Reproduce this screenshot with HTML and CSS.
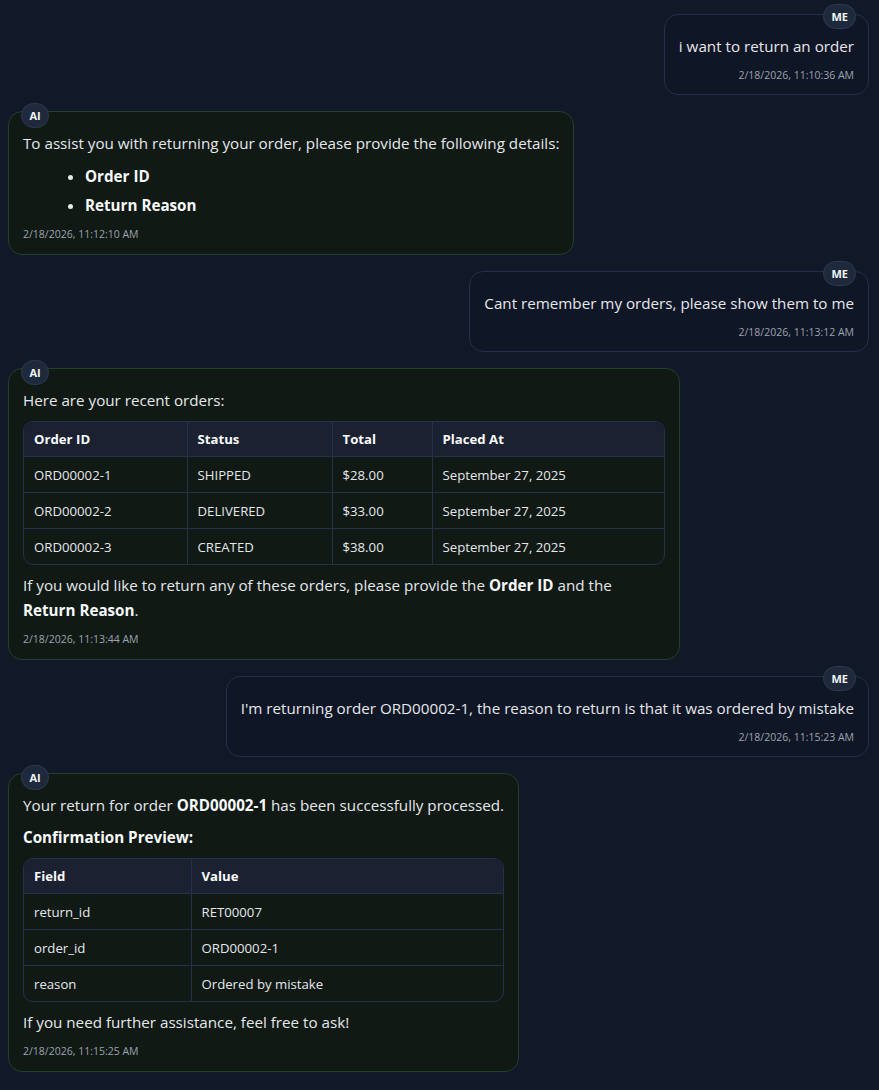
FILE: index.html
```html
<!DOCTYPE html>
<html lang="en">
<head>
<meta charset="utf-8">
<title>Chat</title>
<link rel="stylesheet" href="styles.css">
</head>
<body>
<main class="chat">
  <div class="row row-me">
    <div class="bubble bubble-me">
      <span class="badge badge-me">ME</span>
      <p class="text">i want to return an order</p>
      <div class="time">2/18/2026, 11:10:36 AM</div>
    </div>
  </div>

  <div class="row row-ai">
    <div class="bubble bubble-ai">
      <span class="badge badge-ai">AI</span>
      <p class="text">To assist you with returning your order, please provide the following details:</p>
      <ul class="list">
        <li><strong>Order ID</strong></li>
        <li><strong>Return Reason</strong></li>
      </ul>
      <div class="time">2/18/2026, 11:12:10 AM</div>
    </div>
  </div>

  <div class="row row-me">
    <div class="bubble bubble-me">
      <span class="badge badge-me">ME</span>
      <p class="text">Cant remember my orders, please show them to me</p>
      <div class="time">2/18/2026, 11:13:12 AM</div>
    </div>
  </div>

  <div class="row row-ai">
    <div class="bubble bubble-ai">
      <span class="badge badge-ai">AI</span>
      <p class="text">Here are your recent orders:</p>
      <div class="table-wrap">
        <table class="data">
          <thead>
            <tr><th class="c-id">Order ID</th><th class="c-status">Status</th><th class="c-total">Total</th><th class="c-date">Placed At</th></tr>
          </thead>
          <tbody>
            <tr><td>ORD00002-1</td><td>SHIPPED</td><td>$28.00</td><td>September 27, 2025</td></tr>
            <tr><td>ORD00002-2</td><td>DELIVERED</td><td>$33.00</td><td>September 27, 2025</td></tr>
            <tr><td>ORD00002-3</td><td>CREATED</td><td>$38.00</td><td>September 27, 2025</td></tr>
          </tbody>
        </table>
      </div>
      <p class="text">If you would like to return any of these orders, please provide the <strong>Order ID</strong> and the <strong>Return Reason</strong>.</p>
      <div class="time">2/18/2026, 11:13:44 AM</div>
    </div>
  </div>

  <div class="row row-me">
    <div class="bubble bubble-me">
      <span class="badge badge-me">ME</span>
      <p class="text">I'm returning order ORD00002-1, the reason to return is that it was ordered by mistake</p>
      <div class="time">2/18/2026, 11:15:23 AM</div>
    </div>
  </div>

  <div class="row row-ai">
    <div class="bubble bubble-ai">
      <span class="badge badge-ai">AI</span>
      <p class="text">Your return for order <strong>ORD00002-1</strong> has been successfully processed.</p>
      <p class="text heading"><strong>Confirmation Preview:</strong></p>
      <div class="table-wrap">
        <table class="data">
          <thead>
            <tr><th class="c-field">Field</th><th>Value</th></tr>
          </thead>
          <tbody>
            <tr><td>return_id</td><td>RET00007</td></tr>
            <tr><td>order_id</td><td>ORD00002-1</td></tr>
            <tr><td>reason</td><td>Ordered by mistake</td></tr>
          </tbody>
        </table>
      </div>
      <p class="text">If you need further assistance, feel free to ask!</p>
      <div class="time">2/18/2026, 11:15:25 AM</div>
    </div>
  </div>
</main>
</body>
</html>
```

FILE: styles.css
```css
* { box-sizing: border-box; }

html, body {
  margin: 0;
  padding: 0;
  background: #111827;
}

body {
  font-family: "Open Sans", "Noto Sans", "Liberation Sans", sans-serif;
  font-size: 15.2px;
  line-height: 25px;
  color: #e5e7eb;
}

.chat {
  display: flex;
  flex-direction: column;
  gap: 16px;
  padding: 14px 10px 16px 8px;
}

.row {
  display: flex;
}

.row-me { justify-content: flex-end; }
.row-ai { justify-content: flex-start; }

.bubble {
  position: relative;
  max-width: 672px;
  padding: 19px 14px 11px;
  border: 1px solid;
  border-radius: 14px;
  display: flex;
  flex-direction: column;
  gap: 8px;
}

.bubble-me {
  background: #0f1626;
  border-color: #243049;
  text-align: right;
}

.bubble-ai {
  background: #101914;
  border-color: #22402a;
  padding-bottom: 12px;
}

.badge {
  position: absolute;
  top: -11px;
  height: 25px;
  min-width: 28px;
  padding: 0 7px;
  border-radius: 999px;
  background: #1e293b;
  border: 1px solid #2b3a52;
  color: #f1f5f9;
  font-size: 11px;
  font-weight: 700;
  line-height: 23px;
  text-align: center;
}

.badge-me { right: 12px; }
.badge-ai { left: 12px; top: -9px; }

.text {
  margin: 0;
}

.text strong,
.list strong {
  color: #f8fafc;
  font-weight: 700;
}

.heading {
  margin-top: -1px;
}

.list {
  margin: 0;
  padding-left: 62px;
  display: flex;
  flex-direction: column;
  gap: 4px;
}

.time {
  font-size: 10.5px;
  line-height: 16px;
  color: #9ca3af;
}

.table-wrap {
  border: 1px solid #263049;
  border-radius: 10px;
  overflow: hidden;
}

.data {
  width: 100%;
  border-collapse: collapse;
  font-size: 13.2px;
  line-height: 20px;
  text-align: left;
}

.data th,
.data td {
  padding: 7px 10px;
  border-right: 1px solid #263049;
  border-bottom: 1px solid #263049;
}

.data th:last-child,
.data td:last-child { border-right: 0; }

.data tbody tr:last-child td { border-bottom: 0; }

.data th {
  background: #1b2130;
  color: #f8fafc;
  font-weight: 700;
  padding-top: 7px;
  padding-bottom: 7px;
}

.data td {
  color: #e5e7eb;
  padding-top: 8px;
  padding-bottom: 7px;
}

.c-id { width: 163px; }
.c-status { width: 145px; }
.c-total { width: 100px; }
.c-field { width: 167px; }
```
